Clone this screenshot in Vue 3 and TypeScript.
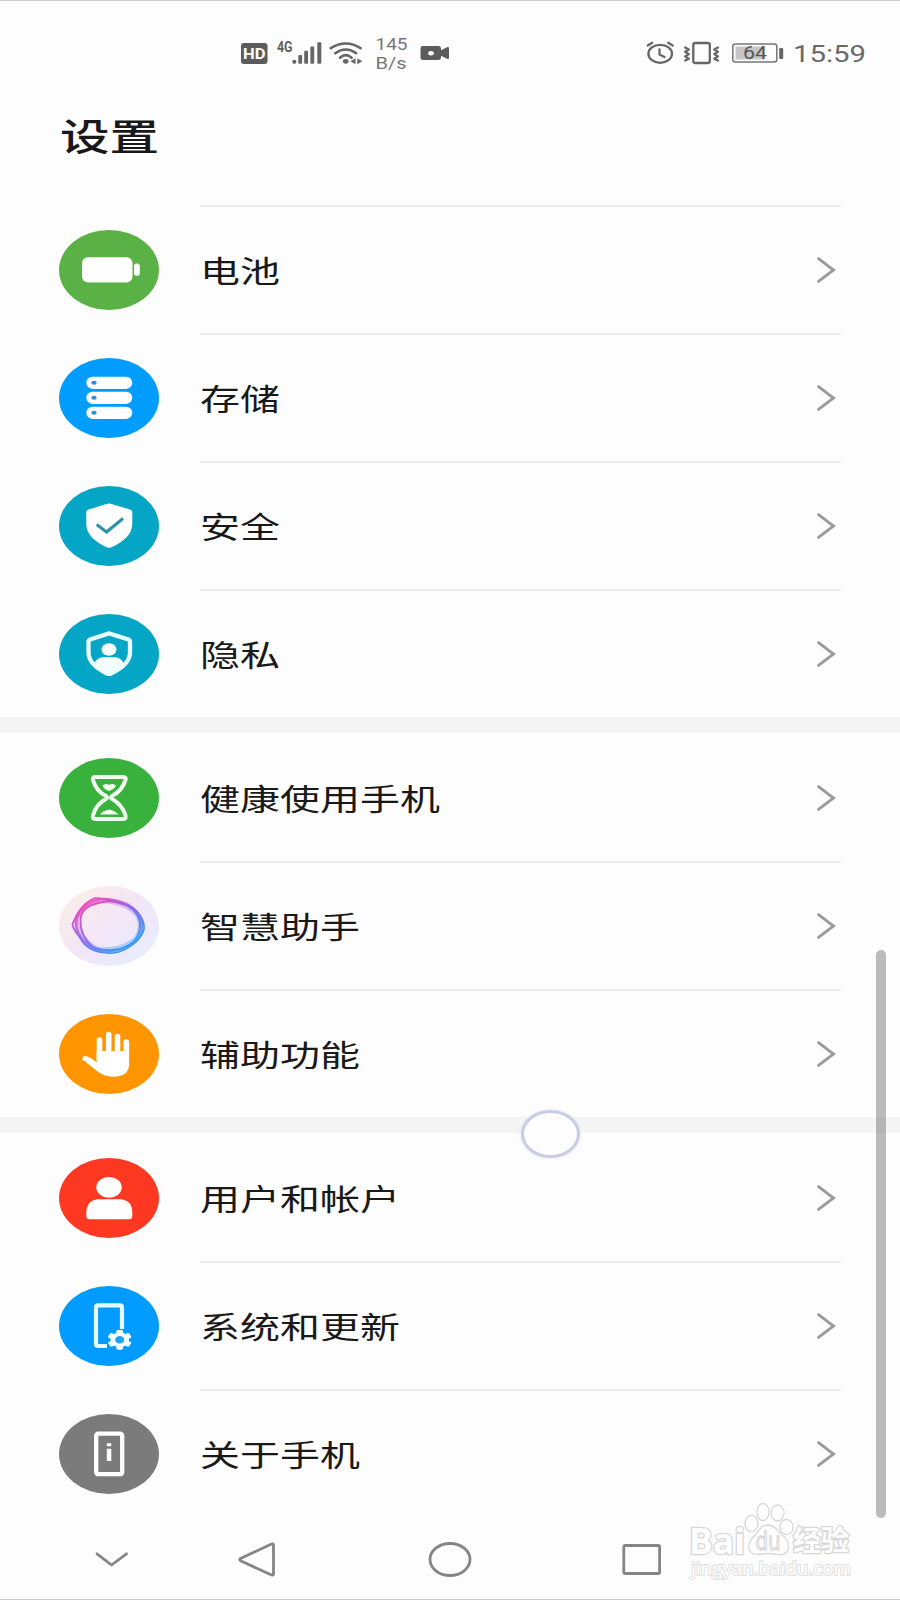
<script setup lang="ts">
interface Item {
  id: string
  label: string
  color: string
}

const groups: Item[][] = [
  [
    { id: 'battery', label: '电池', color: '#5ab145' },
    { id: 'storage', label: '存储', color: '#009dff' },
    { id: 'security', label: '安全', color: '#05a5c5' },
    { id: 'privacy', label: '隐私', color: '#05a5c5' },
  ],
  [
    { id: 'health', label: '健康使用手机', color: '#39b13d' },
    { id: 'assistant', label: '智慧助手', color: 'url(#assistantBg)' },
    { id: 'access', label: '辅助功能', color: '#ff9500' },
  ],
  [
    { id: 'users', label: '用户和帐户', color: '#ff3822' },
    { id: 'system', label: '系统和更新', color: '#009bff' },
    { id: 'about', label: '关于手机', color: '#7b7b7b' },
  ],
]

const teeth = [0, 60, 120, 180, 240, 300]
</script>

<template>
  <div class="screen">
    <header class="status">
      <svg class="status-left" width="220" height="38" viewBox="236 34 220 38">
        <rect x="241" y="43" width="26.5" height="21" rx="3" fill="#5c5c5c" />
        <text x="243" y="59" class="hd" textLength="22.5" lengthAdjust="spacingAndGlyphs">HD</text>
        <text x="277" y="52.3" class="net" textLength="15.500" lengthAdjust="spacingAndGlyphs">4G</text>
        <g fill="#666">
          <circle cx="294.3" cy="61.8" r="2.100" />
          <rect x="298.3" y="55" width="3.8" height="8.8" rx="1" />
          <rect x="304.2" y="50.7" width="3.8" height="13.1" rx="1" />
          <rect x="310.4" y="46.5" width="3.8" height="17.3" rx="1" />
          <rect x="317.3" y="42.3" width="4" height="21.5" rx="1" />
          <ellipse cx="345.7" cy="61.3" rx="2.8" ry="2.4" />
          <path d="M355.5 58.2v6l-5-3zM357.3 58.2v6l5-3z" />
        </g>
        <g fill="none" stroke="#666" stroke-width="2.6" stroke-linecap="round">
          <path d="M330.8 48.2Q345.7 38.8 360.6 48.2" />
          <path d="M335.3 53.2Q345.7 45.8 356.2 53.2" />
          <path d="M340 57.7Q345.7 52.6 351.6 57.7" />
        </g>
        <text x="375.5" y="50" class="speed" textLength="32" lengthAdjust="spacingAndGlyphs">145</text>
        <text x="375.5" y="69" class="speed" textLength="31" lengthAdjust="spacingAndGlyphs">B/s</text>
        <path
          fill="#5c5c5c"
          fill-rule="evenodd"
          d="M423 46h15.500q2.500 0 2.500 2.300v2l6.500-3.300q1.500-.3 1.500 1v10q0 1.300-1.500 1l-6.500-3.300v2q0 2.300-2.500 2.300h-15.500q-2.500 0-2.500-2.300v-9.400q0-2.300 2.500-2.300zM431 51a3 2.300 0 1 0 .01 0z"
        />
      </svg>
      <svg class="status-right" width="230" height="38" viewBox="640 34 230 38">
        <g fill="none" stroke="#666" stroke-width="2.300" stroke-linecap="round" stroke-linejoin="round">
          <ellipse cx="660.2" cy="53.8" rx="11.8" ry="9" />
          <path d="M659.5 49.500v5l5 2.500M647.700 45.500l4.500-2.700M672.700 45.500l-4.500-2.700" />
          <rect x="693.300" y="43" width="16.500" height="20" rx="2" />
          <path d="M685.200 47.500l3.600 2-3.600 2.300 3.600 2.300-3.600 2.300 3.600 2.300-3.600 1.800M717.900 47.500l-3.600 2 3.600 2.300-3.600 2.300 3.600 2.300-3.600 2.300 3.600 1.800" />
        </g>
        <rect x="732.800" y="44" width="44" height="18" rx="2.500" fill="#fdfdfd" stroke="#777" stroke-width="1.500" />
        <rect x="735.500" y="46.500" width="29" height="13" fill="#c6c6c6" />
        <text x="743" y="59" class="charge" textLength="24" lengthAdjust="spacingAndGlyphs">64</text>
        <rect x="779.200" y="48" width="4" height="11" rx="1.200" fill="#666" />
        <text x="793" y="62.300" class="clock" textLength="73" lengthAdjust="spacingAndGlyphs">15:59</text>
      </svg>
    </header>

    <h1 class="title"><span>设置</span></h1>

    <main class="list">
      <section v-for="(group, g) in groups" :key="g" class="group">
        <div v-for="item in group" :key="item.id" class="row">
          <svg class="icon" width="104" height="84" viewBox="-2 -2 104 84">
            <defs v-if="item.id === 'assistant'">
              <linearGradient id="assistantBg" x1="0" y1="0" x2="1" y2="1">
                <stop offset="0" stop-color="#fdeee4" />
                <stop offset=".5" stop-color="#f2e6f7" />
                <stop offset="1" stop-color="#e4eeff" />
              </linearGradient>
              <linearGradient id="assistantRing" x1=".1" y1=".1" x2=".75" y2=".9">
                <stop offset="0" stop-color="#f045bd" />
                <stop offset=".5" stop-color="#9068ea" />
                <stop offset="1" stop-color="#3c98f2" />
              </linearGradient>
            </defs>
            <ellipse cx="50" cy="40" rx="50" ry="40" :fill="item.color" />

            <g v-if="item.id === 'battery'" fill="#fff">
              <rect x="23" y="27.300" width="50.500" height="25.200" rx="6" />
              <rect x="75" y="33.500" width="5.800" height="12.300" rx="2.500" />
            </g>

            <g v-else-if="item.id === 'storage'">
              <template v-for="y in [18.700, 33.700, 48.700]" :key="y">
                <rect x="27.300" :y="y" width="46" height="12.200" rx="6.100" fill="#fff" />
                <ellipse cx="35" :cy="y + 6.100" rx="2.700" ry="2" fill="#2b8fd0" />
              </template>
            </g>

            <g v-else-if="item.id === 'security'">
              <path d="M47.500 18Q50 16.800 52.500 18L71 23.500Q73.300 24.300 73.300 26V38Q73.300 51.500 53 61Q50 62.500 47 61Q27.300 51.500 27.300 38V26Q27.300 24.300 29.500 23.500Z" fill="#fff" />
              <path d="M37.700 38.500L47.500 46L64 32.500" fill="none" stroke="#2a93a8" stroke-width="3" />
            </g>

            <g v-else-if="item.id === 'privacy'">
              <path d="M48.800 19.700Q50 19 51.200 19.700L69.500 25.500Q71 26.100 71 27.500V38.500Q71 50.500 52 59.500Q50 60.400 48 59.500Q29.500 50.500 29.500 38.500V27.500Q29.500 26.100 31 25.500Z" fill="none" stroke="#e8feff" stroke-width="4.300" />
              <ellipse cx="50" cy="35.500" rx="7.500" ry="6.200" fill="#f4ffff" />
              <path d="M35 50Q38 43.300 44 43.300H56Q62 43.300 65 50Q59 57 50 60Q41 57 35 50Z" fill="#f4ffff" />
            </g>

            <g v-else-if="item.id === 'health'">
              <path d="M36 19H64.500Q67.500 19 66.500 22Q63 33 53 38Q51 39.500 53 41Q63 46 66.500 57.500Q67.500 61 64.500 61H36Q33 61 34 57.500Q37 46 47 41Q49 39.500 47 38Q37 33 34 22Q33 19 36 19Z" fill="none" stroke="#f0fff0" stroke-width="4" />
              <path d="M43.500 27.500Q46 24.800 50 26.800Q54 24.800 57 27.500Q55.500 31 50 33Q44.500 31 43.500 27.500ZM41 56.500Q44 52.500 50 51.500Q56 52.500 59.500 56.500Z" fill="#f0fff0" />
            </g>

            <g v-else-if="item.id === 'assistant'" fill="none" stroke="url(#assistantRing)">
              <path d="M13.500 38C17 29 25 16 36 12C48 12 56 16 67 19C78 22 86 34 85 43C82 55 66 66 54 67C40 68 28 63 23 55C19 48 13 43 13.500 38Z" stroke-width="1.700" />
              <path d="M18 32C22 22 32 14 44 13C57 13 73 18 79 28C87 40 83 52 73 58C62 65 48 67 36 63C24 57 14 45 18 32Z" stroke-width="2.600" stroke-opacity=".8" />
              <path d="M22 30C25 20 36 17 49 15C64 16 76 21 80 33C83 42 79 54 70 59C58 66 43 65 34 61C24 53 20 41 22 30Z" stroke-width="1.800" />
              <path d="M17.500 35C21 22 30 14.500 41 14.500C55 14.500 68 18 77 27C84 35 82 47 76 54C66 62 52 65.500 39 63.500C28 59 17.500 47 17.500 35Z" stroke-width="5.500" stroke-opacity=".35" />
            </g>

            <g v-else-if="item.id === 'access'" fill="none" stroke="#fff" stroke-linecap="round">
              <path d="M40.500 26V45M49.700 20.500V42M58.500 22.500V42M67.300 28V46" stroke-width="5.600" />
              <path d="M26 44.500Q30 45 38 52" stroke-width="5" />
              <path d="M37.700 37H70.100V50Q70 62.500 55 62.700Q45 63 38 57L26 47.500L37.700 48Z" fill="#fff" stroke="none" />
            </g>

            <g v-else-if="item.id === 'users'" fill="#fff">
              <ellipse cx="50" cy="29.300" rx="12.700" ry="10.400" />
              <path d="M38 41.300H62Q73.300 43 73.300 54V58Q73.300 61.200 70 61.200H30.500Q27.300 61.200 27.300 58V54Q27.300 43 38 41.300Z" />
            </g>

            <g v-else-if="item.id === 'system'">
              <path d="M48 60H39Q37 60 37 58.300V21Q37 19.300 39 19.300H61Q63 19.300 63 21V43" fill="none" stroke="#e6fbff" stroke-width="4.200" />
              <g transform="translate(60.700 53.800) scale(1.230 1)">
                <circle r="7.500" fill="#f2fdff" />
                <rect v-for="a in teeth" :key="a" x="-2.700" y="-9.900" width="5.400" height="5" rx="1.400" fill="#f2fdff" :transform="`rotate(${a})`" />
                <circle r="3.700" fill="#1ca3f3" />
              </g>
            </g>

            <g v-else>
              <rect x="37.200" y="19.700" width="26" height="40.500" rx="2" fill="none" stroke="#fff" stroke-width="4.300" />
              <path d="M47.800 29.300h4.500v3h-4.500zM47.800 34.800h4.500v12.200h-4.500z" fill="#fff" />
            </g>
          </svg>
          <div class="body">
            <span class="label">{{ item.label }}</span>
            <svg class="chevron" width="20" height="28" viewBox="0 0 20 28">
              <path d="M2.500 2.700L17.500 14L2.500 25.300" fill="none" stroke="#9a9a9a" stroke-width="2.900" stroke-linecap="round" />
            </svg>
          </div>
        </div>
      </section>
    </main>

    <nav class="nav">
      <svg width="900" height="81" viewBox="0 1518 900 81" fill="none" stroke="#858585" stroke-width="2.800" stroke-linecap="round" stroke-linejoin="round">
        <path d="M97 1554.800L111.500 1566L126.500 1554.800" />
        <path d="M240.500 1559.500Q239 1560.500 240.500 1561.700L271.500 1576Q273.500 1576.500 273.500 1575V1546Q273.500 1544.500 271.500 1545Z" />
        <ellipse cx="450" cy="1560.500" rx="20" ry="16" />
        <rect x="623.800" y="1546.500" width="35.800" height="28" rx="1.500" />
      </svg>
    </nav>

    <div class="scrollbar"></div>
    <div class="touch"></div>

    <svg class="watermark" width="180" height="90" viewBox="680 1498 180 90">
      <text x="689" y="1554" class="brand" textLength="56" lengthAdjust="spacingAndGlyphs">Bai</text>
      <g class="mark">
        <ellipse cx="751.500" cy="1523.500" rx="6.500" ry="8.200" />
        <ellipse cx="763" cy="1512" rx="6" ry="8.500" />
        <ellipse cx="777.500" cy="1513" rx="6.500" ry="8" />
        <ellipse cx="786.500" cy="1527" rx="6.500" ry="7.500" />
        <path d="M768 1525C761 1525 759 1531 755 1535C750 1540 748 1544 749 1549C751 1555 756 1555 762 1554Q768 1553 775 1554C781 1556 787 1554 788 1549C790 1543 787 1539 782 1535C778 1531 775 1525 768 1525Z" />
      </g>
      <text x="755.500" y="1550" class="du" textLength="25" lengthAdjust="spacingAndGlyphs">du</text>
      <text x="793" y="1551" class="cn" textLength="56" lengthAdjust="spacingAndGlyphs">经验</text>
      <text x="691" y="1575" class="url" textLength="160" lengthAdjust="spacingAndGlyphs">jingyan.baidu.com</text>
    </svg>
  </div>
</template>

<style>
body {
  margin: 0;
  background: #fdfdfd;
}
</style>

<style scoped>
.screen {
  position: relative;
  box-sizing: border-box;
  width: 900px;
  height: 1600px;
  overflow: hidden;
  background: #fdfdfd;
  border-top: 1px solid #d0d0d0;
  border-bottom: 1px solid #c8c8c8;
  font-family: Roboto, "Noto Sans CJK SC", sans-serif;
  color: #191919;
}
svg {
  display: block;
  flex: none;
}
.status {
  display: flex;
  justify-content: space-between;
  padding: 33px 30px 0 236px;
  height: 38px;
}
.hd {
  font: 700 15.500px Roboto, sans-serif;
  fill: #fdfdfd;
}
.net {
  font: 700 14px Roboto, sans-serif;
  fill: #5f5f5f;
}
.speed {
  font: 400 16px Roboto, sans-serif;
  fill: #777;
}
.charge {
  font: 400 18px Roboto, sans-serif;
  fill: #555;
}
.clock {
  font: 400 23.500px Roboto, sans-serif;
  fill: #6a6a6a;
}
.title {
  display: flex;
  align-items: center;
  margin: 0;
  height: 133px;
  padding-left: 60px;
  box-sizing: border-box;
  padding-bottom: 7px;
  font-size: 37px;
  line-height: 56px;
  font-weight: 500;
  font-family: "Noto Sans CJK SC", sans-serif;
}
.title span {
  transform: scaleX(1.34);
  transform-origin: left center;
}
.group + .group {
  border-top: 16px solid #f5f5f5;
}
.row {
  display: flex;
  align-items: center;
  height: 128px;
  padding-left: 57px;
  padding-right: 59px;
}
.icon {
  margin-top: 1px;
}
.body {
  display: flex;
  align-items: center;
  justify-content: space-between;
  flex: 1;
  box-sizing: border-box;
  height: 128px;
  margin-left: 39px;
  padding-right: 5px;
  border-top: 2px solid #ececec;
}
.group + .group .row:first-child .body {
  border-top-color: transparent;
}
.label {
  margin-bottom: 2px;
  font-family: "Noto Sans CJK SC", sans-serif;
  font-size: 30px;
  line-height: 40px;
  white-space: nowrap;
  transform: scaleX(1.333);
  transform-origin: left center;
}
.scrollbar {
  position: absolute;
  left: 876px;
  top: 949px;
  width: 10px;
  height: 568px;
  border-radius: 5px;
  background: rgba(0, 0, 0, 0.26);
}
.touch {
  position: absolute;
  box-sizing: border-box;
  left: 521px;
  top: 1109px;
  width: 59px;
  height: 48px;
  border: 3px solid #c9cde3;
  border-radius: 50%;
  background: #fdfdfd;
  box-shadow: 0 0 3px rgba(190, 200, 240, 0.5);
}
.watermark {
  position: absolute;
  left: 680px;
  top: 1497px;
}
.mark,
.brand,
.du,
.cn,
.url {
  fill: #fefefe;
  stroke: #d8d8d8;
  stroke-width: 1.300;
}
.brand {
  font: 700 35px "Open Sans", sans-serif;
  paint-order: stroke;
  stroke-width: 2.600;
}
.du {
  font: 400 25px "Open Sans", sans-serif;
}
.cn {
  font: 700 28px "Noto Sans CJK SC", sans-serif;
  paint-order: stroke;
  stroke-width: 2.600;
}
.url {
  font: 400 19px "Open Sans", sans-serif;
  paint-order: stroke;
  stroke: #e0e0e0;
  stroke-width: 2;
}
</style>
